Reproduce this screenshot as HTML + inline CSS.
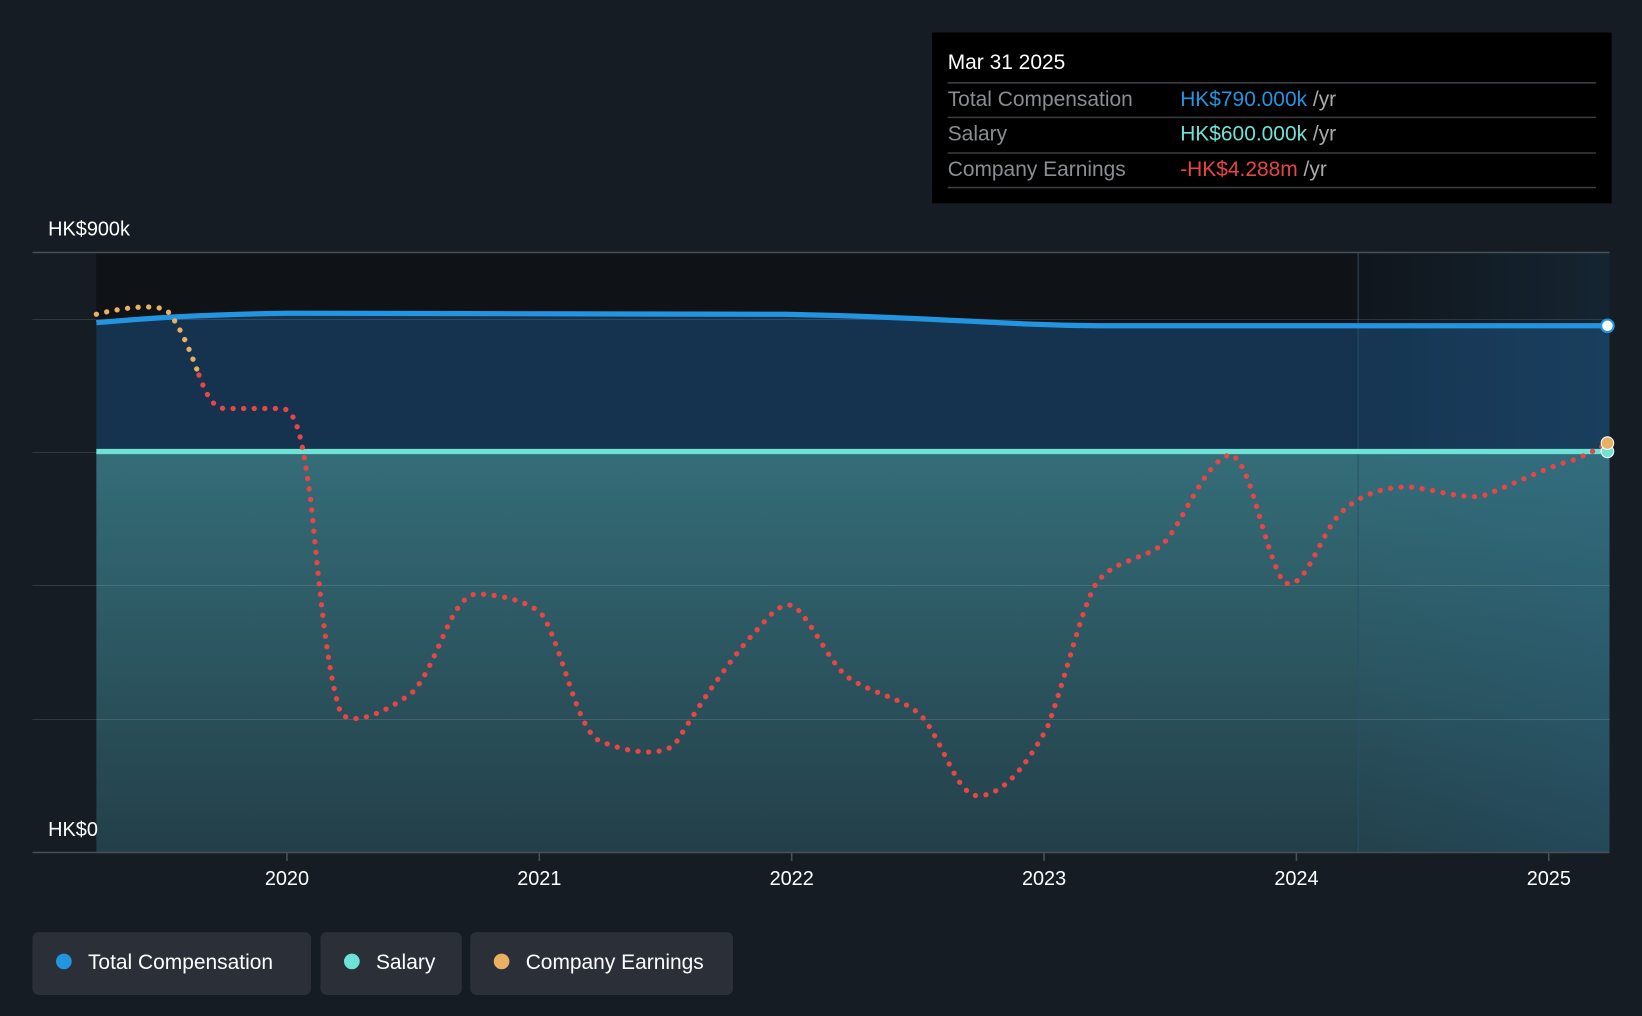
<!DOCTYPE html>
<html><head><meta charset="utf-8"><style>
html,body{margin:0;padding:0;background:#161c24;}
svg{display:block;font-family:"Liberation Sans",sans-serif;}
</style></head><body>
<svg width="1642" height="1016" viewBox="0 0 1568 970" xmlns="http://www.w3.org/2000/svg">
<defs>
<linearGradient id="teal" x1="0" y1="0" x2="0" y2="1">
<stop offset="0" stop-color="#346d78"/><stop offset="1" stop-color="#233f49"/>
</linearGradient>
<linearGradient id="fc" x1="0" y1="0" x2="1" y2="0">
<stop offset="0" stop-color="#2a6f9a" stop-opacity="0.04"/><stop offset="1" stop-color="#2a6f9a" stop-opacity="0.2"/>
</linearGradient>
</defs>
<rect width="1568" height="970" fill="#161c24"/>
<rect x="92" y="241" width="1445" height="573" fill="#0f1217"/>
<path d="M92,308 C150,303 200,300 275,299 L750,300 C900,303 950,310 1050,311 L1537,311 L1537,432 L92,432 Z" fill="#15334f"/>
<rect x="92" y="432" width="1445" height="382" fill="url(#teal)"/>
<rect x="1297" y="241" width="240" height="573" fill="url(#fc)"/>
<line x1="1297" y1="241" x2="1297" y2="814" stroke="#2a5068" stroke-opacity="0.6" stroke-width="1.5"/>
<g stroke="#ffffff" stroke-opacity="0.12" stroke-width="1">
<line x1="31" y1="305" x2="1537" y2="305"/>
<line x1="31" y1="432" x2="1537" y2="432"/>
<line x1="31" y1="559" x2="1537" y2="559"/>
<line x1="31" y1="687" x2="1537" y2="687"/>
</g>
<line x1="31" y1="241" x2="1537" y2="241" stroke="#4a5058" stroke-width="1.5"/>
<line x1="31" y1="814" x2="1537" y2="814" stroke="#4a5058" stroke-width="1.5"/>
<g stroke="#4a5058" stroke-width="1.5">
<line x1="274" y1="814" x2="274" y2="822"/><line x1="515" y1="814" x2="515" y2="822"/>
<line x1="756" y1="814" x2="756" y2="822"/><line x1="997" y1="814" x2="997" y2="822"/>
<line x1="1238" y1="814" x2="1238" y2="822"/><line x1="1479" y1="814" x2="1479" y2="822"/>
</g>
<path d="M92,308 C150,303 200,300 275,299 L750,300 C900,303 950,310 1050,311 L1537,311" fill="none" stroke="#2394e0" stroke-width="5"/>
<line x1="92" y1="431" x2="1537" y2="431" stroke="#6ee3d5" stroke-width="5"/>
<path d="M92,300 C120,293 150,290 160,297 C175,315 185,345 190,358" fill="none" stroke="#e8b060" stroke-width="5" stroke-dasharray="0.1 10" stroke-linecap="round"/>
<path d="M190,358 C198,380 205,390 215,390 L270,390 C285,392 290,430 297,480 C305,560 312,640 325,680 C335,695 370,680 395,660 C420,630 430,570 455,567 C480,568 510,575 520,590 C540,630 550,690 570,706 C590,716 630,725 645,710 C670,670 690,640 715,610 C730,595 745,570 760,580 C780,600 795,640 815,650 C840,665 870,668 885,690 C905,720 915,760 935,760 C960,758 980,730 1000,695 C1020,640 1030,590 1045,560 C1060,535 1090,535 1110,520 C1130,500 1150,440 1175,434 C1195,440 1205,520 1225,555 C1245,570 1260,510 1280,490 C1300,470 1330,462 1355,466 C1380,470 1405,478 1420,472 C1450,460 1480,445 1500,440 C1515,435 1525,428 1535,424" fill="none" stroke="#e84545" stroke-width="5" stroke-dasharray="0.1 10" stroke-linecap="round"/>
<circle cx="1535" cy="311" r="6" fill="#ffffff" stroke="#2394e0" stroke-width="2"/>
<circle cx="1535" cy="431" r="6" fill="#6ee3d5" stroke="#fff" stroke-width="1"/>
<circle cx="1535" cy="423" r="6" fill="#e8b060" stroke="#fff" stroke-width="1"/>
<text x="46" y="225" fill="#fff" font-size="19">HK$900k</text>
<text x="46" y="798" fill="#fff" font-size="19">HK$0</text>
<g fill="#fff" font-size="19" text-anchor="middle">
<text x="274" y="845">2020</text><text x="515" y="845">2021</text><text x="756" y="845">2022</text>
<text x="997" y="845">2023</text><text x="1238" y="845">2024</text><text x="1479" y="845">2025</text>
</g>
<rect x="890" y="31" width="649" height="163" fill="#000"/>
<text x="905" y="66" fill="#fff" font-size="20">Mar 31 2025</text>
<g stroke="#3a3d42" stroke-width="1.5">
<line x1="905" y1="79" x2="1524" y2="79"/><line x1="905" y1="112" x2="1524" y2="112"/>
<line x1="905" y1="146" x2="1524" y2="146"/><line x1="905" y1="179" x2="1524" y2="179"/>
</g>
<g font-size="20">
<text x="905" y="101" fill="#8a8d92">Total Compensation</text>
<text x="1127" y="101" fill="#2394e0">HK$790.000k <tspan fill="#aaa">/yr</tspan></text>
<text x="905" y="134" fill="#8a8d92">Salary</text>
<text x="1127" y="134" fill="#6ee3d5">HK$600.000k <tspan fill="#aaa">/yr</tspan></text>
<text x="905" y="168" fill="#8a8d92">Company Earnings</text>
<text x="1127" y="168" fill="#e84545">-HK$4.288m <tspan fill="#aaa">/yr</tspan></text>
</g>
<rect x="31" y="890" width="266" height="60" rx="6" fill="#2a2f38"/>
<circle cx="61" cy="918" r="7.5" fill="#2394e0"/>
<text x="84" y="925" fill="#fff" font-size="20">Total Compensation</text>
<rect x="306" y="890" width="135" height="60" rx="6" fill="#2a2f38"/>
<circle cx="336" cy="918" r="7.5" fill="#6ee3d5"/>
<text x="359" y="925" fill="#fff" font-size="20">Salary</text>
<rect x="449" y="890" width="251" height="60" rx="6" fill="#2a2f38"/>
<circle cx="479" cy="918" r="7.5" fill="#e8b060"/>
<text x="502" y="925" fill="#fff" font-size="20">Company Earnings</text>
</svg>
</body></html>
